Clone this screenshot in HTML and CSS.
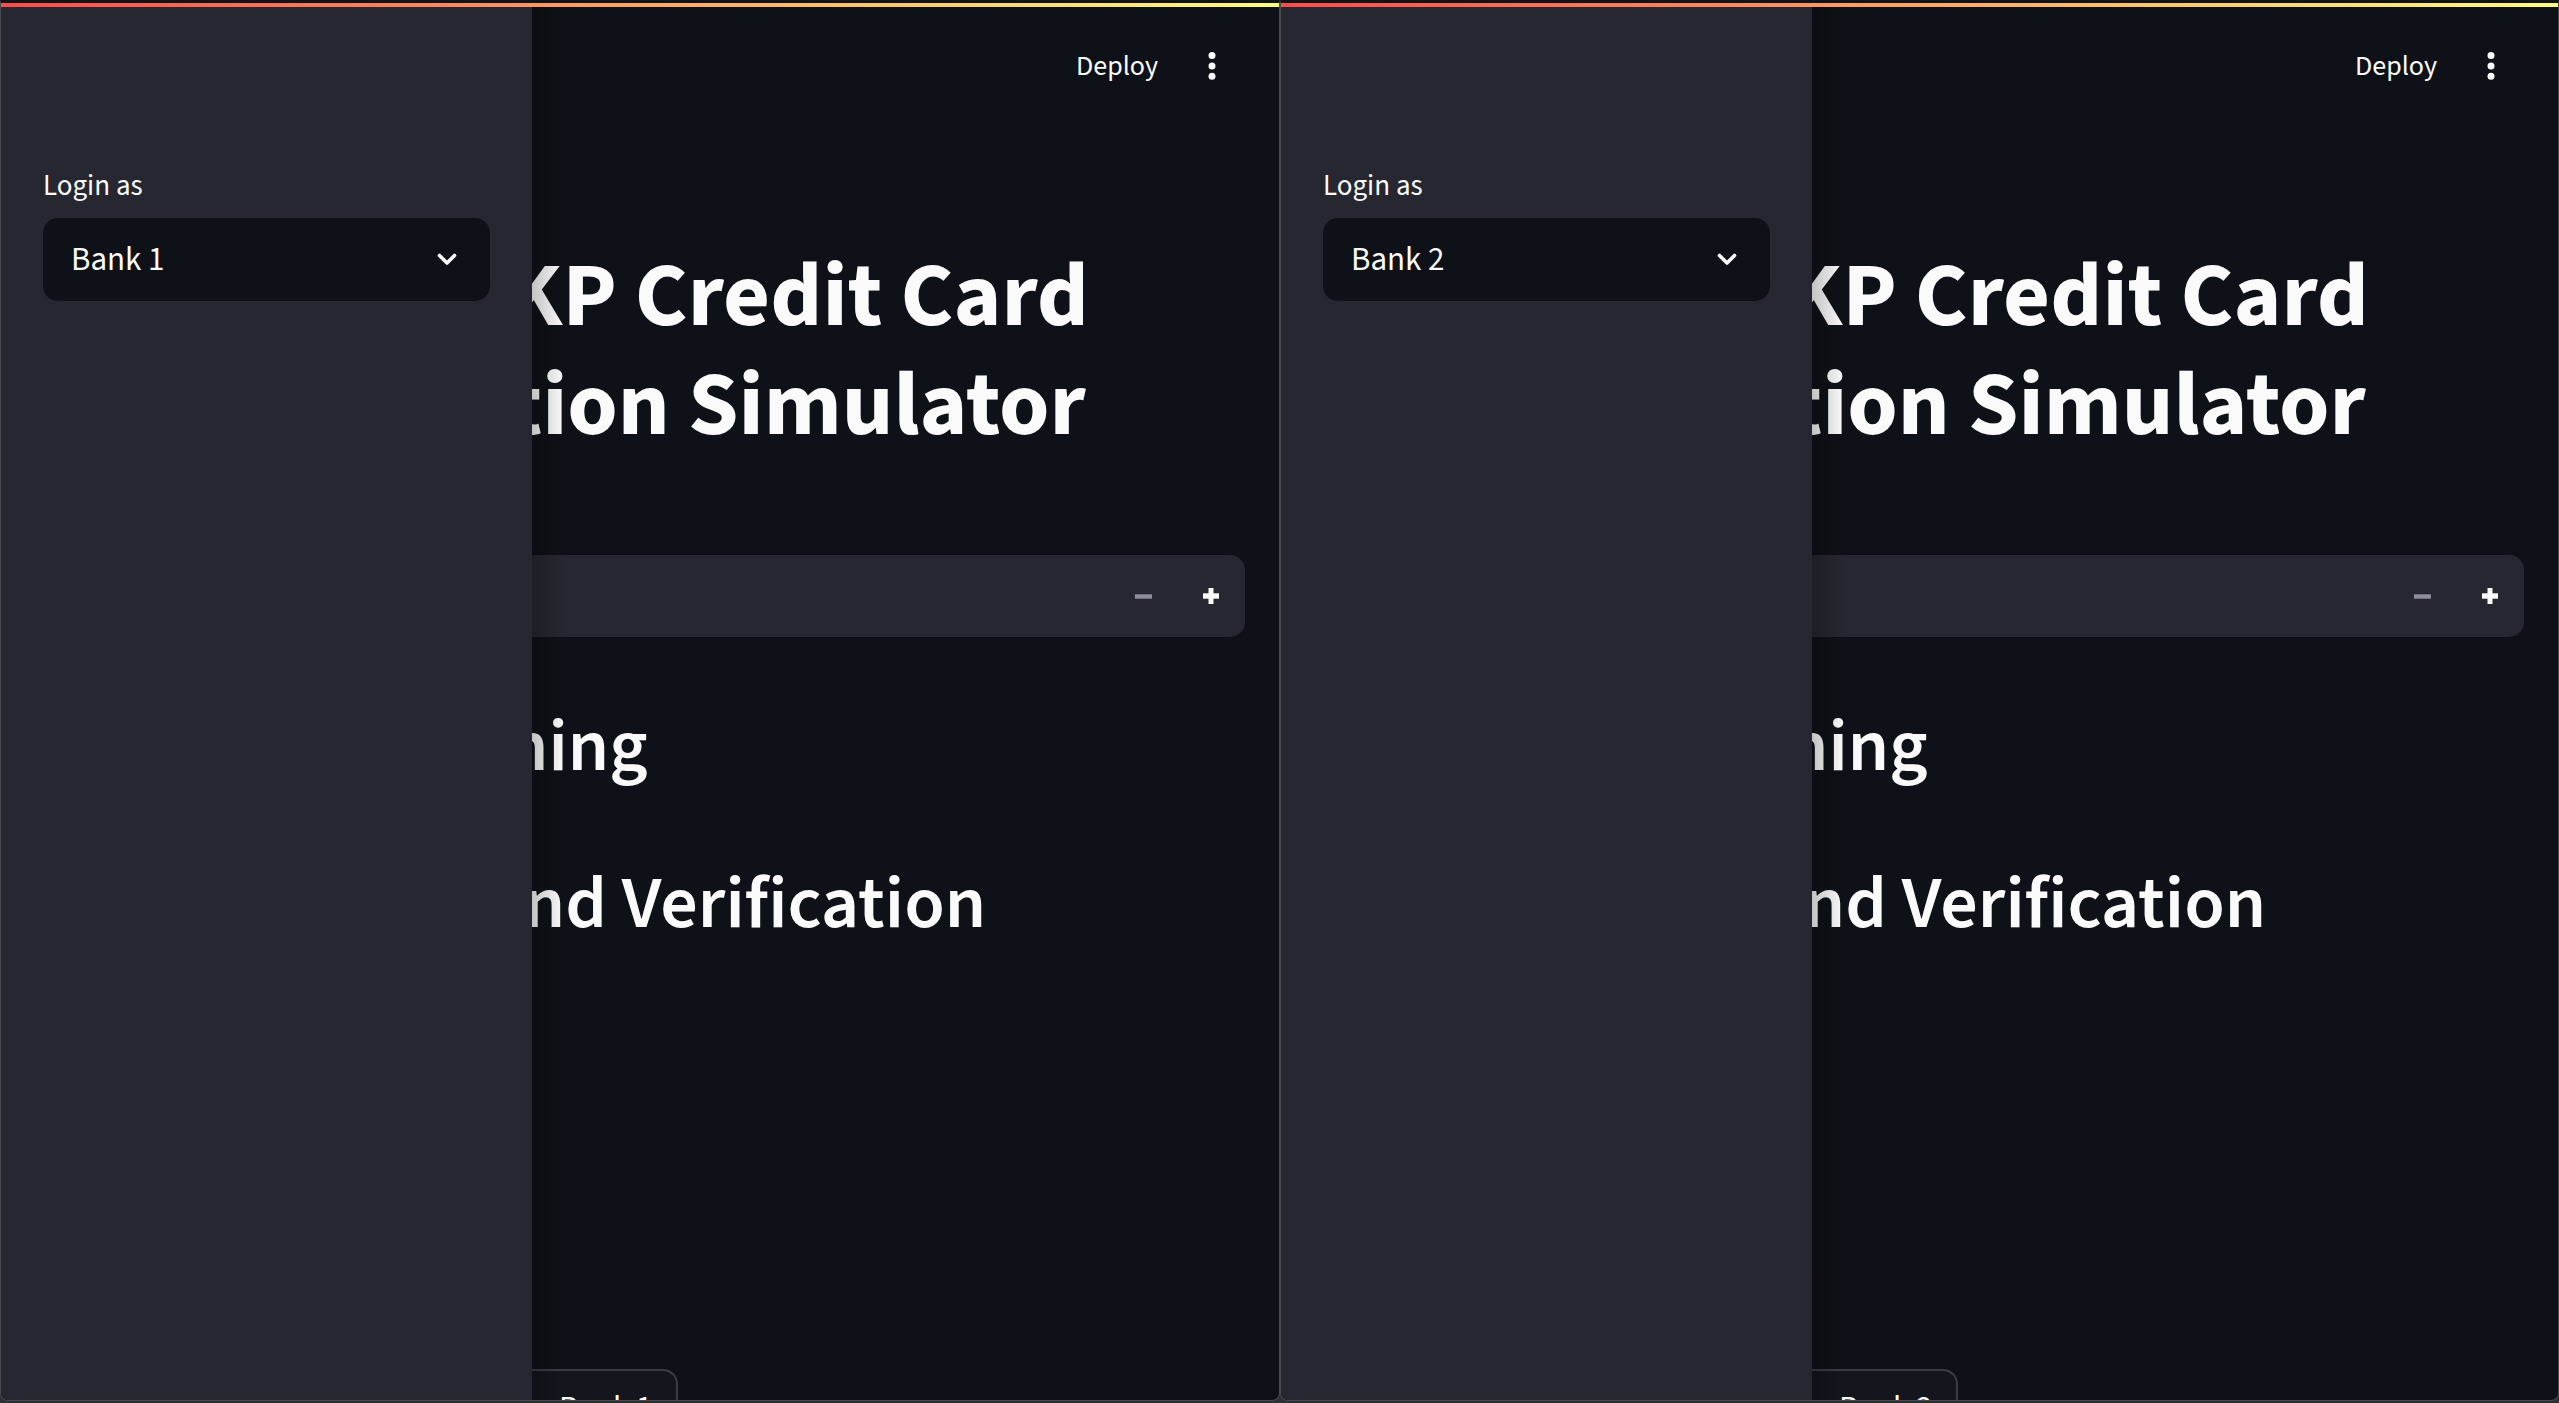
FILE: index.html
```html
<!DOCTYPE html>
<html lang="en">
<head>
<meta charset="utf-8">
<title>ZKP Credit Card Verification Simulator</title>
<link rel="stylesheet" href="styles.css">
</head>
<body>
<div class="frame">
  <section class="pane pane-left">
    <div class="decoration"></div>
    <header class="topbar">
      <span class="deploy">Deploy</span>
      <span class="menu">
        <svg width="8" height="28" viewBox="0 0 8 28"><circle cx="4" cy="3.6" r="3.5" fill="#fafafa"/><circle cx="4" cy="13.9" r="3.5" fill="#fafafa"/><circle cx="4" cy="24.2" r="3.5" fill="#fafafa"/></svg>
      </span>
    </header>
    <main class="content">
      <h1 class="title">Two-Bank ZKP Credit Card KYC Verification Simulator</h1>
      <label class="field-label">Credit limit</label>
      <div class="numinput">
        <span class="num-value">5000</span>
        <span class="step step-minus"><svg width="17" height="5" viewBox="0 0 17 5"><rect x="0" y="0.3" width="17" height="4.4" fill="#8d8f9c"/></svg></span>
        <span class="step step-plus"><svg width="16" height="16" viewBox="0 0 16 16"><rect x="5.5" y="0" width="5" height="16" fill="#fafafa"/><rect x="0" y="5.3" width="16" height="5.4" fill="#fafafa"/></svg></span>
      </div>
      <h2 class="section">Credit Card Signing</h2>
      <h2 class="section">Proof Sharing and Verification</h2>
      <div class="record">
        <span class="record-key">Signed by</span>
        <span class="record-val">Bank 1</span>
      </div>
    </main>
    <aside class="sidebar">
      <div class="side-label">Login as</div>
      <div class="select">
        <span class="select-value">Bank 1</span>
        <svg class="chev" width="20" height="13" viewBox="0 0 20 13"><polyline points="2.5,2.5 10,10 17.5,2.5" fill="none" stroke="#fafafa" stroke-width="3.6" stroke-linecap="round" stroke-linejoin="round"/></svg>
      </div>
    </aside>
  </section>
  <section class="pane pane-right">
    <div class="decoration"></div>
    <header class="topbar">
      <span class="deploy">Deploy</span>
      <span class="menu">
        <svg width="8" height="28" viewBox="0 0 8 28"><circle cx="4" cy="3.6" r="3.5" fill="#fafafa"/><circle cx="4" cy="13.9" r="3.5" fill="#fafafa"/><circle cx="4" cy="24.2" r="3.5" fill="#fafafa"/></svg>
      </span>
    </header>
    <main class="content">
      <h1 class="title">Two-Bank ZKP Credit Card KYC Verification Simulator</h1>
      <label class="field-label">Credit limit</label>
      <div class="numinput">
        <span class="num-value">5000</span>
        <span class="step step-minus"><svg width="17" height="5" viewBox="0 0 17 5"><rect x="0" y="0.3" width="17" height="4.4" fill="#8d8f9c"/></svg></span>
        <span class="step step-plus"><svg width="16" height="16" viewBox="0 0 16 16"><rect x="5.5" y="0" width="5" height="16" fill="#fafafa"/><rect x="0" y="5.3" width="16" height="5.4" fill="#fafafa"/></svg></span>
      </div>
      <h2 class="section">Credit Card Signing</h2>
      <h2 class="section">Proof Sharing and Verification</h2>
      <div class="record">
        <span class="record-key">Signed by</span>
        <span class="record-val">Bank 2</span>
      </div>
    </main>
    <aside class="sidebar">
      <div class="side-label">Login as</div>
      <div class="select">
        <span class="select-value">Bank 2</span>
        <svg class="chev" width="20" height="13" viewBox="0 0 20 13"><polyline points="2.5,2.5 10,10 17.5,2.5" fill="none" stroke="#fafafa" stroke-width="3.6" stroke-linecap="round" stroke-linejoin="round"/></svg>
      </div>
    </aside>
  </section>
</div>
</body>
</html>
```
FILE: styles.css
```css
html, body {
  margin: 0;
  padding: 0;
}
body {
  width: 2559px;
  height: 1403px;
  overflow: hidden;
  background: #2e2f33;
  font-family: "Source Sans Pro", "Source Sans 3", Lato, "Noto Sans", sans-serif;
  color: #fafafa;
}
.frame {
  display: flex;
  width: 2559px;
}
.pane {
  position: relative;
  box-sizing: border-box;
  height: 1401px;
  border: 1px solid #4a4b51;
  border-top: 3px solid #121316;
  border-radius: 0 0 8px 8px;
  overflow: hidden;
  background: #0e1117;
}
.pane-left { width: 1280px; }
.pane-right { width: 1279px; }

.decoration {
  position: absolute;
  top: 0;
  left: 0;
  right: 0;
  height: 4px;
  background: linear-gradient(90deg, #ff4b4b, #fffd80);
  z-index: 5;
}

/* header */
.topbar {
  display: flex;
  justify-content: flex-end;
  align-items: center;
  height: 126px;
  padding-right: 63px;
}
.deploy {
  font-size: 28px;
  line-height: 32px;
  margin-right: 50px;
}
.menu {
  display: flex;
  width: 8px;
  height: 28px;
}

/* main content */
.content {
  padding: 113px 34px 0;
}
.title {
  margin: 0;
  font-size: 91px;
  line-height: 109px;
  font-weight: 700;
}
.field-label {
  display: block;
  margin-top: 47px;
  font-size: 28px;
  line-height: 36px;
  margin-bottom: 12px;
}
.numinput {
  display: flex;
  align-items: center;
  height: 82px;
  border-radius: 15px;
  background: #262730;
}
.num-value {
  flex: 1;
  padding-left: 24px;
  font-size: 33px;
}
.step {
  display: flex;
  align-items: center;
  justify-content: center;
  width: 68px;
  height: 82px;
}
.section {
  margin: 66px 0 0;
  font-size: 74px;
  line-height: 88px;
  font-weight: 600;
}
.section + .section {
  margin-top: 69px;
}
.record {
  display: grid;
  grid-template-columns: 522px auto;
  width: 643px;
  box-sizing: border-box;
  margin-top: 421px;
  padding-top: 18px;
  height: 120px;
  border: 2px solid #3b3d47;
  border-radius: 15px;
  background: #13161d;
  font-size: 33px;
  line-height: 40px;
}
.record-key {
  padding-left: 24px;
}

/* sidebar overlay */
.sidebar {
  position: absolute;
  top: 0;
  left: 0;
  bottom: 0;
  width: 531px;
  box-sizing: border-box;
  padding: 165px 42px 0;
  background: #262730;
  z-index: 3;
}
.sidebar::after {
  content: "";
  position: absolute;
  top: 0;
  bottom: 0;
  right: -32px;
  width: 32px;
  background: linear-gradient(90deg, rgba(0,0,0,0.22), rgba(0,0,0,0));
}
.side-label {
  font-size: 29px;
  line-height: 36px;
  margin-bottom: 14px;
}
.select {
  display: flex;
  align-items: center;
  justify-content: space-between;
  height: 83px;
  padding: 0 33px 0 28px;
  border-radius: 15px;
  background: #0e1117;
}
.select-value {
  font-size: 33px;
}
.chev {
  display: block;
}
```
